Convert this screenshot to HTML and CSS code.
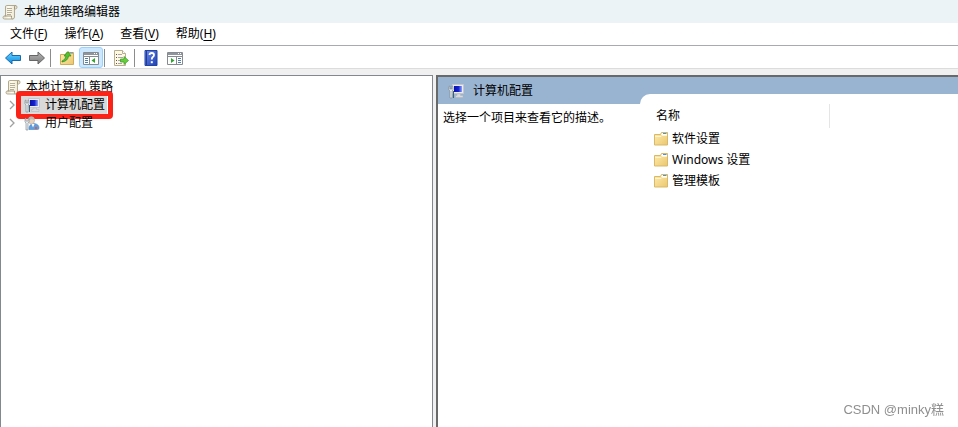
FILE: index.html
```html
<!DOCTYPE html>
<html lang="zh-CN">
<head>
    <meta charset="UTF-8">
    <meta name="viewport" content="width=device-width, initial-scale=1.0">
    <title>本地组策略编辑器</title>
    <link rel="stylesheet" href="styles.css">
</head>
<body>
    <!-- Shared icons -->
    <svg class="defs" width="0" height="0" aria-hidden="true">
        <linearGradient id="g-paper" x1="0" y1="0" x2="1" y2="0">
            <stop offset="0" stop-color="#e3dcc4"/><stop offset="0.4" stop-color="#fffdf2"/><stop offset="1" stop-color="#e6dfc8"/>
        </linearGradient>
        <linearGradient id="g-blue" x1="0" y1="0" x2="0" y2="1">
            <stop offset="0" stop-color="#7fd6fb"/><stop offset="0.5" stop-color="#35b0f2"/><stop offset="1" stop-color="#1689d8"/>
        </linearGradient>
        <linearGradient id="g-gray" x1="0" y1="0" x2="0" y2="1">
            <stop offset="0" stop-color="#b5b5b5"/><stop offset="1" stop-color="#7c7c7c"/>
        </linearGradient>
        <linearGradient id="g-folder" x1="0" y1="0" x2="1" y2="1">
            <stop offset="0" stop-color="#ffecae"/><stop offset="1" stop-color="#eac76e"/>
        </linearGradient>
        <linearGradient id="g-screen" x1="0" y1="0" x2="1" y2="0">
            <stop offset="0" stop-color="#0a12a8"/><stop offset="0.55" stop-color="#1420d0"/><stop offset="1" stop-color="#8fa4f4"/>
        </linearGradient>
        <linearGradient id="g-help" x1="0" y1="0" x2="1" y2="1">
            <stop offset="0" stop-color="#6b8be8"/><stop offset="1" stop-color="#1d3fb4"/>
        </linearGradient>
        <symbol id="i-scroll" viewBox="0 0 16 16">
            <path d="M4.500 1.500h9q1.500 0 1.500 1.700t-1.500 1.800h-1v8q0 2-2 2h-8q-1.500 0-1.500-1.500t1.500-1.500h1V3q0-1.500 1-1.500z" fill="url(#g-paper)" stroke="#b3aa8e"/>
            <path d="M12.500 5V3q0-1.500 1.200-1.500M2.500 12h7v1.500q0 1.500 1 1.500" fill="none" stroke="#a0977c"/>
            <path d="M5 4.500h5M5 6.500h5M5 8.500h5M5 10.500h4" stroke="#b6ae96"/>
        </symbol>
        <symbol id="i-computer" viewBox="0 0 16 16">
            <path d="M4.500 1.500h11v9h-11z" fill="#e9ebf0" stroke="#c3c7d2"/>
            <path d="M6 3h8v6H6z" fill="url(#g-screen)"/>
            <path d="M9 11h3.500v1.500H15v2H7.500v-2H9z" fill="#d8dadd" stroke="#aeb1b8" stroke-width=".5"/>
            <path d="M1 3.500v3.500l1 1v7h2V8l1-1V3.500L4 3v3H2V3z" fill="#e8ebee" stroke="#7b858f" stroke-width=".6"/>
            <path d="M5.500 8v7" stroke="#3c6178"/>
        </symbol>
        <symbol id="i-user" viewBox="0 0 16 16">
            <path d="M5 14.500q-.5-5.500 5-6 5 .5 5 4.500 0 1.500-1.500 1.500z" fill="#5f9fe0" stroke="#4f86bd" stroke-width=".6"/>
            <path d="M7.500 9l1.500 3.500L10.500 9z" fill="#fff"/>
            <ellipse cx="7.500" cy="5.500" rx="3" ry="3.600" fill="#e9d2bb" stroke="#a9a296" stroke-width=".5"/>
            <path d="M4.500 5Q4 1.500 7 1.500q4 0 3.500 4-2-2-6-.5z" fill="#b9b8b1"/>
            <path d="M1 3.500v3.500l1 1v7h2V8l1-1V3.500L4 3v3H2V3z" fill="#e8ebee" stroke="#7b858f" stroke-width=".6"/>
            <circle cx="12" cy="13" r="1.200" fill="#d8604a"/>
        </symbol>
        <symbol id="i-folder" viewBox="0 0 14 14">
            <path d="M.5 2.500h6l1-2h6v12.500H.5z" fill="url(#g-folder)" stroke="#d9b968"/>
            <path d="M8 1h5v2H7z" fill="#fff"/>
            <path d="M9 1.500h3.500" stroke="#4b94d4"/>
            <path d="M1 4.500h6l1-1h5" fill="none" stroke="#fff4cd"/>
        </symbol>
    </svg>

    <div class="window">
        <header class="title-bar">
            <svg class="icon"><use href="#i-scroll"/></svg>
            <h1>本地组策略编辑器</h1>
        </header>

        <nav class="menu-bar">
            <button type="button">文件(<u>F</u>)</button>
            <button type="button">操作(<u>A</u>)</button>
            <button type="button">查看(<u>V</u>)</button>
            <button type="button">帮助(<u>H</u>)</button>
        </nav>

        <div class="toolbar">
            <button type="button" aria-label="后退">
                <svg class="icon" viewBox="0 0 16 16"><path d="M.5 8L7 2v3.500h8.500v5H7V14z" fill="url(#g-blue)" stroke="#1869ab"/></svg>
            </button>
            <button type="button" aria-label="前进">
                <svg class="icon" viewBox="0 0 16 16"><path d="M15.500 8L9 2v3.500H.5v5H9V14z" fill="url(#g-gray)" stroke="#666"/></svg>
            </button>
            <span class="separator"></span>
            <button type="button" aria-label="上一级">
                <svg class="icon" viewBox="0 0 16 16">
                    <path d="M1.500 4.500h5l1-2h7v12h-13z" fill="url(#g-folder)" stroke="#d0ab59"/>
                    <path d="M11 3h3" stroke="#4b94d4"/>
                    <path d="M3 11q3.500-1 4-5H5l4-4.500L12 6h-2.500Q9 11 3 12z" fill="#4fc432" stroke="#2b8a1c" stroke-width=".7"/>
                </svg>
            </button>
            <button type="button" class="pressed" aria-label="显示/隐藏控制台树" aria-pressed="true">
                <svg class="icon" viewBox="0 0 16 16">
                    <path d="M.5 2.500h15v12H.5z" fill="#fff" stroke="#858b91"/>
                    <path d="M1 3h14v2H1z" fill="#8e959c"/><path d="M11 3.500h1M13 3.500h1" stroke="#fff"/>
                    <path d="M1 6.500h14M6.500 7v7" stroke="#858b91"/>
                    <path d="M2 8.500h3M2 10.500h3M2 12.500h3" stroke="#4d7fa9"/>
                    <path d="M12 8v5l-3.500-2.500z" fill="#2ca72c"/>
                </svg>
            </button>
            <span class="separator"></span>
            <button type="button" aria-label="导出列表">
                <svg class="icon" viewBox="0 0 16 16">
                    <path d="M1.500.5h8l3 3v12h-11z" fill="#fff9df" stroke="#b5ad94"/><path d="M9.500.5v3h3" fill="#fff" stroke="#b5ad94"/>
                    <path d="M3 4.500h1M3 7.500h1M3 10.500h1M3 13.500h1" stroke="#58536e"/>
                    <path d="M5 4.500h4M5 7.500h5M5 10.500h3M5 13.500h4" stroke="#aaa3af"/>
                    <path d="M7.500 9H11V6.500l4.500 4-4.500 4V12H7.500z" fill="#65cf3b" stroke="#37982a" stroke-width=".7"/>
                </svg>
            </button>
            <span class="separator"></span>
            <button type="button" aria-label="帮助">
                <svg class="icon" viewBox="0 0 16 16">
                    <path d="M2 .5h12v15H2z" fill="url(#g-help)" stroke="#2343a2"/><path d="M3.500 1v14" stroke="#203b99"/>
                    <path d="M6.500 5q0-2 2.200-2 2.300 0 2.300 2 0 1.200-1.200 2Q8.800 7.800 8.800 9.500" fill="none" stroke="#fff" stroke-width="1.800"/>
                    <path d="M7.800 11.200h2v2h-2z" fill="#fff"/>
                </svg>
            </button>
            <button type="button" aria-label="显示/隐藏操作窗格">
                <svg class="icon" viewBox="0 0 16 16">
                    <path d="M.5 2.500h15v12H.5z" fill="#fff" stroke="#858b91"/>
                    <path d="M1 3h14v2H1z" fill="#8e959c"/><path d="M11 3.500h1M13 3.500h1" stroke="#fff"/>
                    <path d="M1 6.500h14M9.500 7v7" stroke="#858b91"/>
                    <path d="M11 8.500h3M11 10.500h3M11 12.500h3" stroke="#4d7fa9"/>
                    <path d="M4 8v5l3.500-2.500z" fill="#2ca72c"/>
                </svg>
            </button>
        </div>

        <main class="panes">
            <section class="tree-pane">
                <button type="button" class="node root">
                    <svg class="icon"><use href="#i-scroll"/></svg><span>本地计算机 策略</span>
                </button>
                <ul class="tree">
                    <li>
                        <button type="button" class="node selected">
                            <svg class="chevron" viewBox="0 0 8 10"><path d="M2 1l4 4-4 4"/></svg>
                            <span class="label"><svg class="icon"><use href="#i-computer"/></svg>计算机配置</span>
                        </button>
                        <div class="callout"></div>
                    </li>
                    <li>
                        <button type="button" class="node">
                            <svg class="chevron" viewBox="0 0 8 10"><path d="M2 1l4 4-4 4"/></svg>
                            <span class="label"><svg class="icon"><use href="#i-user"/></svg>用户配置</span>
                        </button>
                    </li>
                </ul>
            </section>

            <section class="result-pane">
                <div class="result-header">
                    <svg class="icon"><use href="#i-computer"/></svg>
                    <h2>计算机配置</h2>
                </div>
                <div class="result-body">
                    <p class="description">选择一个项目来查看它的描述。</p>
                    <div class="list">
                        <table>
                            <thead>
                                <tr><th>名称</th></tr>
                            </thead>
                            <tbody>
                                <tr><td><div class="item"><svg class="folder"><use href="#i-folder"/></svg>软件设置</div></td></tr>
                                <tr><td><div class="item"><svg class="folder"><use href="#i-folder"/></svg>Windows 设置</div></td></tr>
                                <tr><td><div class="item"><svg class="folder"><use href="#i-folder"/></svg>管理模板</div></td></tr>
                            </tbody>
                        </table>
                    </div>
                </div>
            </section>
        </main>
    </div>
    <div class="watermark">CSDN @minky糕</div>
</body>
</html>
```
FILE: styles.css
```css
* { margin: 0; padding: 0; box-sizing: border-box; }
body { font-family: "Noto Sans", "Noto Sans CJK SC", sans-serif; font-size: 12px; line-height: 18px; color: #000; background: #f0f0f0; }
button { font: inherit; color: inherit; background: none; border: none; }
h1, h2 { font-size: 12px; font-weight: normal; }
.defs { position: absolute; }
.icon { width: 16px; height: 16px; flex: none; display: block; }
.window { display: flex; flex-direction: column; height: 100vh; }

.title-bar { display: flex; align-items: center; gap: 6px; height: 23px; padding: 0 2px; background: #ecf3f7; }
.menu-bar { display: flex; gap: 17px; height: 23px; padding: 0 10px; background: #fff; border-bottom: 1px solid #a9a9b0; }
.menu-bar u { text-underline-offset: 2px; }

.toolbar { display: flex; align-items: center; height: 23px; padding: 1px 1px 0; background: #fff; border-bottom: 1px solid #dcdcdc; }
.toolbar button { display: flex; align-items: center; justify-content: center; width: 24px; height: 21px; }
.toolbar .pressed { background: #cce8ff; border: 1px solid #99d1ff; border-radius: 3px; }
.separator { width: 1px; height: 18px; margin: 0 4px 0 1px; background: #8c8c8c; }

.panes { display: grid; grid-template-columns: 433px 1fr; gap: 3px; flex: 1; margin-top: 6px; }
.tree-pane { padding: 2px 0; background: #fff; border: 1px solid #828790; border-bottom: none; }
.tree { list-style: none; }
.tree li { position: relative; }
.node { display: flex; align-items: center; height: 18px; gap: 5px; padding-left: 7px; }
.root { padding-left: 4px; }
.label { display: flex; align-items: center; gap: 5px; padding: 0 2px 0 3px; }
.selected .label { background: #d9d9d9; }
.chevron { width: 8px; height: 10px; fill: none; stroke: #a0a0a0; stroke-width: 1.3; }
.callout { position: absolute; top: -5px; left: 15px; width: 97px; height: 28px; border: 5px solid #fb2318; border-radius: 4px; }

.result-pane { display: flex; flex-direction: column; background: #fff; border-top: 2px solid #696969; border-left: 2px solid #696969; }
.result-header { display: flex; align-items: center; gap: 9px; height: 27px; padding-left: 10px; background: #99b4d1; }
.result-body { display: grid; grid-template-columns: 202px 1fr; flex: 1; }
.description { padding: 5px; white-space: nowrap; }
/* the list sheet overlaps the lower edge of the header band */
.list { margin-top: -10px; padding: 10px 14px; background: #fff; border-top-left-radius: 10px; }
.list table { width: 176px; border-collapse: collapse; }
.list th { height: 24px; padding: 0 2px; font-weight: normal; text-align: left; border-right: 1px solid #e5e5e5; }
.list td { height: 21px; }
.item { display: flex; align-items: center; gap: 4px; white-space: nowrap; }
.folder { width: 14px; height: 14px; }
.watermark { position: fixed; right: 14px; bottom: 7px; font-family: "Liberation Sans", "Noto Sans CJK SC", sans-serif; font-size: 13px; line-height: 20px; color: #8f8f8f; }
```
